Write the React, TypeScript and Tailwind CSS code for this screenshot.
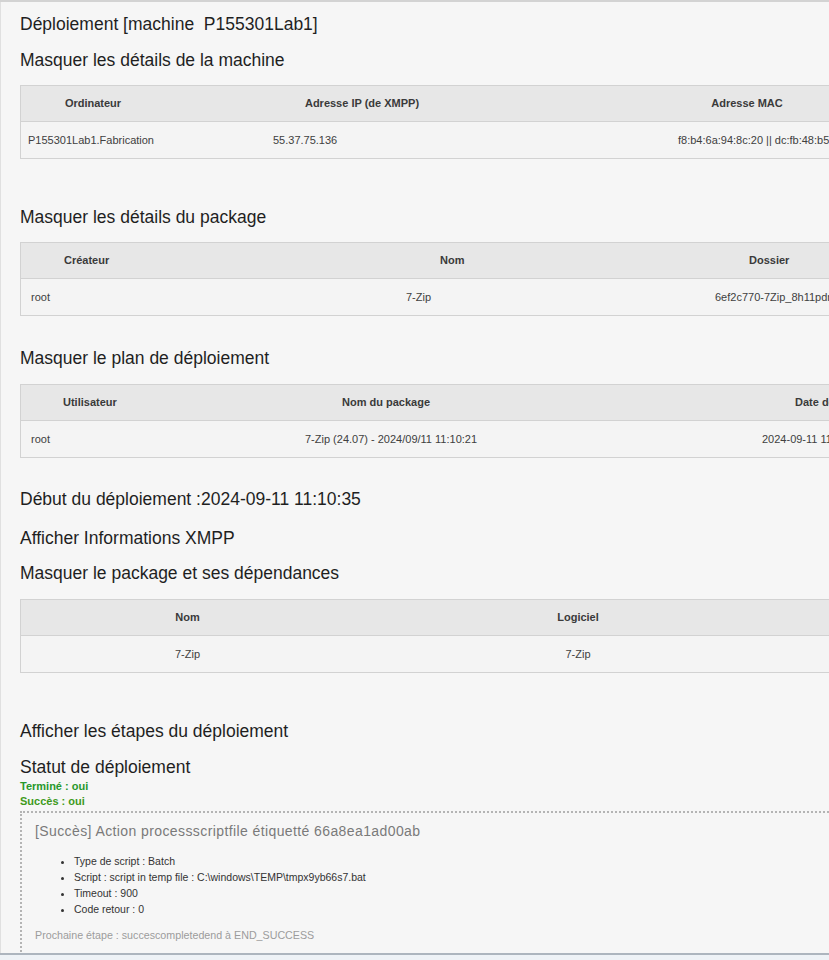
import React from 'react'

function Heading({ children, className = '' }: { children: React.ReactNode; className?: string }) {
  return <div className={`text-[17.5px] leading-[20px] text-[#1f1f1f] whitespace-nowrap ${className}`}>{children}</div>
}

function Table({ header, row, className = '' }: { header: React.ReactNode; row: React.ReactNode; className?: string }) {
  return (
    <div className={`w-[1000px] border border-[#d2d2d2] ${className}`}>
      <div className="h-9 flex items-center bg-[#e7e7e7] border-b border-[#d2d2d2] text-[11px] font-bold text-[#3a3a3a] whitespace-nowrap">
        {header}
      </div>
      <div className="h-9 flex items-center bg-[#f4f4f4] text-[11px] text-[#404040] whitespace-nowrap">
        {row}
      </div>
    </div>
  )
}

export default function App() {
  return (
    <div className="w-[829px] h-[960px] overflow-hidden flex flex-col bg-[#f6f6f6] font-['Liberation_Sans',Arial,sans-serif]">
      <div className="h-[2px] flex-none bg-[#d3d3d3]" />
      <div className="h-[951px] flex-none overflow-hidden border-l border-[#e0e0e0] pl-[19px] pt-[12px]">
        <Heading>Déploiement [machine&nbsp; P155301Lab1]</Heading>

        <Heading className="mt-[16px]">Masquer les détails de la machine</Heading>
        <Table
          className="mt-[15px]"
          header={
            <>
              <div className="w-[144px] flex-none text-center">Ordinateur</div>
              <div className="w-[394px] flex-none text-center">Adresse IP (de XMPP)</div>
              <div className="w-[376px] flex-none text-center">Adresse MAC</div>
            </>
          }
          row={
            <>
              <div className="w-[242px] flex-none pl-[7px]">P155301Lab1.Fabrication</div>
              <div className="w-[405px] flex-none pl-[10px]">55.37.75.136</div>
              <div className="flex-none pl-[10px]">f8:b4:6a:94:8c:20 || dc:fb:48:b5:5a:11</div>
            </>
          }
        />

        <Heading className="mt-[48px]">Masquer les détails du package</Heading>
        <Table
          className="mt-[15px]"
          header={
            <>
              <div className="w-[419px] flex-none pl-[43px]">Créateur</div>
              <div className="w-[309px] flex-none">Nom</div>
              <div className="flex-none">Dossier</div>
            </>
          }
          row={
            <>
              <div className="w-[385px] flex-none pl-[10px]">root</div>
              <div className="w-[309px] flex-none">7-Zip</div>
              <div className="flex-none">6ef2c770-7Zip_8h11pdnl</div>
            </>
          }
        />

        <Heading className="mt-[32px]">Masquer le plan de déploiement</Heading>
        <Table
          className="mt-[16px]"
          header={
            <>
              <div className="w-[321px] flex-none pl-[42px]">Utilisateur</div>
              <div className="w-[453px] flex-none">Nom du package</div>
              <div className="flex-none">Date de début</div>
            </>
          }
          row={
            <>
              <div className="w-[284px] flex-none pl-[10px]">root</div>
              <div className="w-[457px] flex-none">7-Zip (24.07) - 2024/09/11 11:10:21</div>
              <div className="flex-none">2024-09-11 11:10:21</div>
            </>
          }
        />

        <Heading className="mt-[31px]">Début du déploiement :2024-09-11 11:10:35</Heading>
        <Heading className="mt-[19px]">Afficher Informations XMPP</Heading>
        <Heading className="mt-[15px]">Masquer le package et ses dépendances</Heading>
        <Table
          className="mt-[16px]"
          header={
            <>
              <div className="w-[333px] flex-none text-center">Nom</div>
              <div className="w-[448px] flex-none text-center">Logiciel</div>
            </>
          }
          row={
            <>
              <div className="w-[333px] flex-none text-center">7-Zip</div>
              <div className="w-[448px] flex-none text-center">7-Zip</div>
            </>
          }
        />

        <Heading className="mt-[48px]">Afficher les étapes du déploiement</Heading>
        <Heading className="mt-[16px]">Statut de déploiement</Heading>
        <div className="mt-[2px] text-[11px] leading-[15px] font-bold text-[#27982b]">Terminé : oui</div>
        <div className="text-[11px] leading-[15px] font-bold text-[#3f9a1c]">Succès : oui</div>

        <div className="mt-[2px] w-[1000px] h-[200px] border-2 border-dotted border-[#b4b4b4] pl-[13px] pt-[10px]">
          <div className="text-[14px] leading-[16px] tracking-[0.4px] text-[#7a7a7a] whitespace-nowrap">
            [Succès] Action processscriptfile étiquetté 66a8ea1ad00ab
          </div>
          <ul className="mt-[14px] pl-[39px] list-disc text-[10.5px] leading-[16px] text-[#333]">
            <li>Type de script : Batch</li>
            <li>Script : script in temp file : C:\windows\TEMP\tmpx9yb66s7.bat</li>
            <li>Timeout : 900</li>
            <li>Code retour : 0</li>
          </ul>
          <div className="mt-[11px] text-[10.7px] leading-[14px] text-[#9c9c9c]">
            Prochaine étape : succescompletedend à END_SUCCESS
          </div>
        </div>
      </div>
      <div className="h-[2px] flex-none bg-[#adb5be]" />
      <div className="flex-1 bg-[#eef2f6]" />
    </div>
  )
}
